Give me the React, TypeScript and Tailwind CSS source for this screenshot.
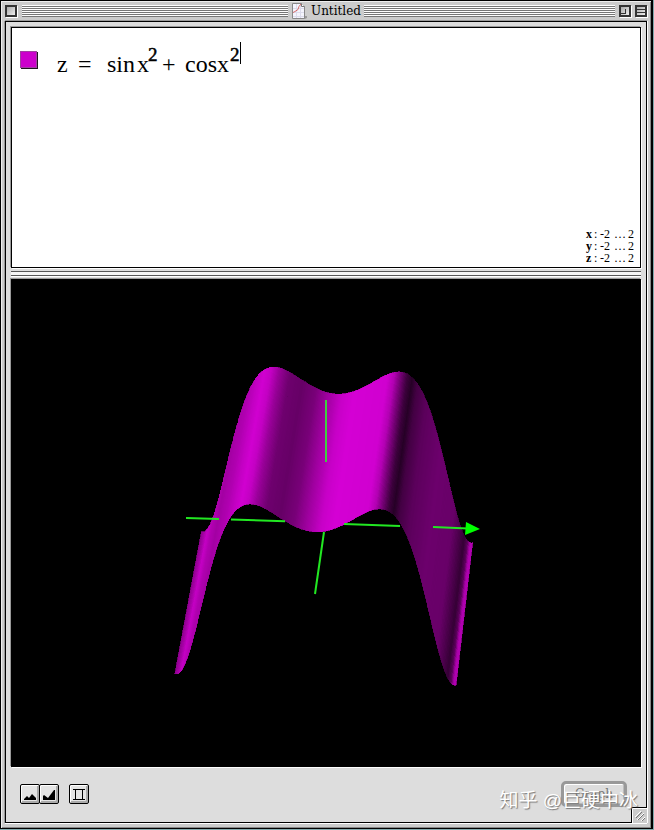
import type { ReactNode } from 'react';

type Point = [number, number];

// Brightness of the magenta surface along the x axis.
const SHADES: Point[] = [
  [-2, 140], [-1.9, 196], [-1.8, 176], [-1.5, 162], [-1.25, 176], [-1.02, 208],
  [-0.92, 196], [-0.8, 150], [-0.66, 110], [-0.48, 102], [-0.3, 120], [-0.12, 160],
  [0.08, 200], [0.25, 212], [0.72, 208], [0.82, 180], [0.91, 120], [1.0, 62],
  [1.07, 38], [1.15, 68], [1.28, 92], [1.5, 108], [1.72, 104], [1.82, 72],
  [1.88, 52], [1.93, 90], [1.97, 176], [2, 176],
];

function shade(x: number): string {
  let i = 0;
  while (i < SHADES.length - 2 && SHADES[i + 1][0] < x) i++;
  const [x0, v0] = SHADES[i];
  const [x1, v1] = SHADES[i + 1];
  const v = Math.round(v0 + ((v1 - v0) * (x - x0)) / (x1 - x0));
  return `rgb(${v},0,${v})`;
}

const height = (x: number) => Math.sin(x * x) + Math.cos(x * x);

function backEdge(x: number): Point {
  const z = height(x);
  return [337 + x * (69.2 + z), 453.5 + 2.8 * x - 59.4 * z];
}

function frontEdge(x: number): Point {
  const z = height(x);
  return [315.5 + x * (71.7 + z), 593 + 2.8 * x - 61.2 * z];
}

const STEPS = 260;

function Surface() {
  const strips: ReactNode[] = [];
  for (let i = 0; i < STEPS; i++) {
    const a = -2 + (4 * i) / STEPS;
    const b = -2 + (4 * (i + 1)) / STEPS;
    const points = [backEdge(a), backEdge(b), frontEdge(b), frontEdge(a)]
      .map((p) => p.map((n) => n.toFixed(2)).join(','))
      .join(' ');
    const fill = shade((a + b) / 2);
    strips.push(<polygon key={i} points={points} fill={fill} stroke={fill} strokeWidth="0.7" />);
  }
  return <g shapeRendering="crispEdges">{strips}</g>;
}

function Plot() {
  return (
    <svg viewBox="11 279 630 488" className="block h-auto w-full bg-black" role="img" aria-label="3D surface">
      <Surface />
      <g stroke="#22e822" strokeWidth="2" fill="none">
        <path d="M186 518L219 519M231 519.5L285 521.2M344 524L400 526M433 527L468 528.5" />
        <path d="M324 532L315 594" />
        <path d="M326 400V462" stroke="#3fce3f" />
      </g>
      <path d="M466 522L480 529L465 535Z" fill="#00ff00" />
    </svg>
  );
}

function Stripes() {
  return (
    <div className="h-3 flex-1 bg-[repeating-linear-gradient(to_bottom,#ffffff_0px,#ffffff_1px,#777777_1px,#777777_2px)]" />
  );
}

function TitleButton({ label, children }: { label: string; children?: ReactNode }) {
  return (
    <button
      type="button"
      aria-label={label}
      className="block size-3 shrink-0 border-2 border-[#333] bg-linear-to-br from-[#aaa] to-[#eee] shadow-[1px_1px_0_#fff]"
    >
      {children}
    </button>
  );
}

function ToolButton({ label, children }: { label: string; children: ReactNode }) {
  return (
    <button
      type="button"
      aria-label={label}
      className="flex size-5 items-center justify-center rounded-[2px] border border-black bg-[#e4e4e4] shadow-[inset_1px_1px_0_#fff,inset_-2px_-2px_0_#aaa]"
    >
      {children}
    </button>
  );
}

function DocumentIcon() {
  return (
    <svg width="16" height="16" viewBox="0 0 16 16" className="shrink-0" aria-hidden="true">
      <path d="M12 13h3v2l-2 1H3v-1h9z" fill="#999" />
      <path d="M.5.5h9l3 3v12H.5z" fill="#f4f4fc" stroke="#888" />
      <path d="M4.500 1v14M8.500 1v14M1 5.500h11M1 9.500h11M1 13.500h11" stroke="#dcdcec" />
      <path d="M1 9.500l2-1 3-2 1-3 2-2.500" fill="none" stroke="#d66a6a" />
      <path d="M9.500.5v3h3" fill="#fff" stroke="#777" />
    </svg>
  );
}

function Range({ axis }: { axis: string }) {
  return (
    <div className="flex">
      <span className="w-2 font-bold">{axis}</span>
      <span className="w-[6px]">:</span>
      <span className="w-3">-2</span>
      <span className="flex-1 text-center">…</span>
      <span>2</span>
    </div>
  );
}

export default function App() {
  return (
    <div className="min-h-screen bg-[#82a9ac] pr-px pb-px font-['Liberation_Serif',serif] text-black">
      <div className="relative border border-r-2 border-black bg-[#ccc] pr-1 pb-[5px] pl-1 shadow-[inset_1px_1px_0_#eee,inset_-1px_-1px_0_#888]">
        <header className="grid h-5 grid-cols-[1fr_auto_1fr] items-center">
          <div className="flex items-center gap-[5px]">
            <TitleButton label="Close" />
            <Stripes />
          </div>
          <div className="flex items-center gap-[3px] pr-[3px] pl-1">
            <DocumentIcon />
            <h1 className="font-['DejaVu_Serif',serif] text-xs leading-4">Untitled</h1>
          </div>
          <div className="flex items-center gap-1">
            <Stripes />
            <TitleButton label="Zoom">
              <span className="block size-[5px] border-r border-b border-[#333]" />
            </TitleButton>
            <TitleButton label="Collapse">
              <span className="block h-1 w-full border-y border-[#333]" />
            </TitleButton>
          </div>
        </header>

        <main className="border border-black bg-[#ddd] px-[5px] pt-[5px] shadow-[0_1px_0_#fff,1px_0_0_#fff,-1px_0_0_#999,0_-1px_0_#999]">
          <section className="flex h-[241px] flex-col justify-between border border-black bg-white shadow-[-1px_-1px_0_#999,1px_1px_0_#fff]">
            <div className="flex pt-[14px] pl-2">
              <button
                type="button"
                aria-label="Surface colour"
                className="mt-[9px] size-[17px] border border-[#a040a0] bg-[#cc00cc] shadow-[1px_1px_0_#201020]"
              />
              <div role="textbox" aria-label="Equation" className="flex pt-2 pl-5 text-2xl leading-7">
                <span className="w-[21px]">z</span>
                <span className="w-[29px]">=</span>
                <span className="w-[30px]">sin</span>
                <span className="w-[11px]">x</span>
                <sup className="top-0 -mt-[9px] w-[14px] text-[19px] leading-7 [-webkit-text-stroke:0.5px_black]">2</sup>
                <span className="w-[23px]">+</span>
                <span className="w-8">cos</span>
                <span className="w-[13px]">x</span>
                <sup className="top-0 -mt-[9px] text-[19px] leading-7 [-webkit-text-stroke:0.5px_black]">2</sup>
                <span className="-mt-2 h-[22px] w-px bg-black" />
              </div>
            </div>
            <div className="mr-[6px] mb-[3px] w-12 self-end text-xs leading-3">
              <Range axis="x" />
              <Range axis="y" />
              <Range axis="z" />
            </div>
          </section>

          <div className="flex h-[11px] flex-col justify-center">
            <div className="h-[5px] border-y border-[#555] bg-[#f4f4f4] shadow-[0_1px_0_#fff]" />
          </div>

          <section className="shadow-[-1px_-1px_0_#999,1px_1px_0_#fff]">
            <Plot />
          </section>

          <footer className="flex h-[55px] items-start pt-[14px] pr-[14px] pl-[9px]">
            <div className="mt-[3px] flex">
              <ToolButton label="Small view">
                <svg width="14" height="14" viewBox="0 0 14 14">
                  <path d="M1 13v-1l3-3 2 2 3-4 4 4v2z" />
                </svg>
              </ToolButton>
              <div className="-ml-px">
                <ToolButton label="Large view">
                  <svg width="14" height="14" viewBox="0 0 14 14">
                    <path d="M1 13V9l1-1 4 3 6-8h1v10z" />
                  </svg>
                </ToolButton>
              </div>
            </div>
            <div className="mt-[3px] ml-[10px]">
              <ToolButton label="Frame">
                <svg width="14" height="14" viewBox="0 0 14 14" fill="none" stroke="#000">
                  <path d="M1 2.500h12M1 12.500h12M3.500 2v10M10.500 2v10" />
                </svg>
              </ToolButton>
            </div>
            <button
              type="button"
              disabled
              className="ml-auto h-[26px] w-[66px] rounded-[5px] border-[3px] border-[#999] bg-[#ddd] font-['DejaVu_Serif',serif] text-xs leading-5 text-[#777] shadow-[inset_1px_1px_0_#fff,inset_-1px_-1px_0_#bbb]"
            >
              Graph
            </button>
          </footer>
        </main>

        <div className="absolute right-1 bottom-[5px] size-4 border-t border-l border-black bg-[#ccc] shadow-[inset_1px_1px_0_#fff]">
          <svg width="15" height="15" viewBox="0 0 15 15" fill="none" aria-hidden="true">
            <path d="M3 9l6-6M5 12l7-7M9 13l4-4" stroke="#fff" />
            <path d="M4 10l6-6M6 12l6-6M10 13l3-3" stroke="#777" />
          </svg>
        </div>

        <div className="pointer-events-none absolute right-[13px] bottom-[13px] font-['Liberation_Sans','Noto_Sans_CJK_SC',sans-serif] text-[19px] leading-7 whitespace-nowrap text-white [text-shadow:1px_1px_1px_#777]">
          知乎 @巨硬中冰
        </div>
      </div>
    </div>
  );
}
